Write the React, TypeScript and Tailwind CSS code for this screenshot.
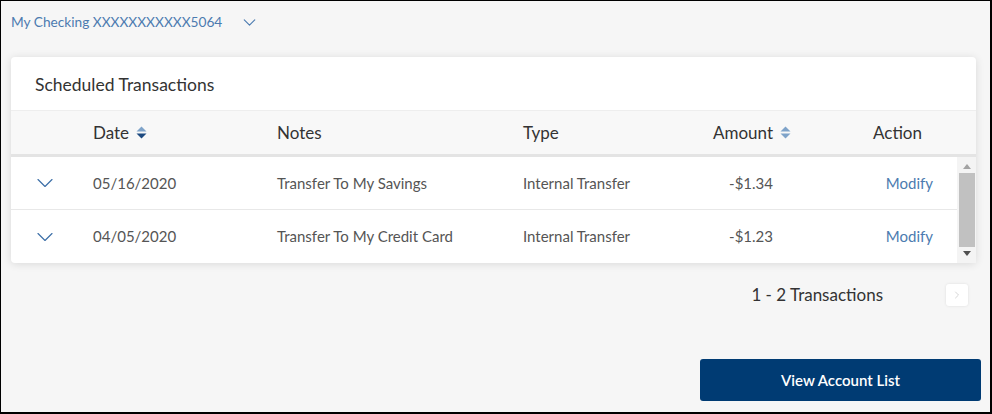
import { ChevronDown, ChevronRight } from "lucide-react";

const SortIcon = ({ down }: { down?: boolean }) => (
  <svg width="11" height="13" viewBox="0 0 11 13" className="ml-[7px]">
    <path d="M5.5 0.5 L10.5 5.5 L0.5 5.5 Z" fill="#7fa3c9" />
    <path d="M0.5 7.5 L10.5 7.5 L5.5 12.5 Z" fill={down ? "#1d4a80" : "#7fa3c9"} />
  </svg>
);

const rows = [
  { date: "05/16/2020", notes: "Transfer To My Savings", type: "Internal Transfer", amount: "-$1.34" },
  { date: "04/05/2020", notes: "Transfer To My Credit Card", type: "Internal Transfer", amount: "-$1.23" },
];

export default function App() {
  return (
    <div
      className="flex h-[414px] w-[992px] flex-col border-t border-r-2 border-b-2 border-l border-black bg-[#f6f6f6]"
      style={{ fontFamily: "Lato, 'Open Sans', sans-serif" }}
    >
      <div className="flex h-[41px] items-center pl-[10px] pt-[1px] text-[13.7px] text-[#4c7bb0]">
        <span>My Checking XXXXXXXXXXX5064</span>
        <ChevronDown className="ml-[17px] h-[21px] w-[21px]" strokeWidth={1.3} />
      </div>

      <div className="ml-[10px] mt-[15px] w-[965px] rounded-[4px] bg-white shadow-[0_1px_8px_rgba(0,0,0,0.12)]">
        <div className="flex h-[53px] items-center pl-[24px] pt-[3px] text-[17.5px] text-[#333]">
          Scheduled Transactions
        </div>
        <div className="grid h-[47px] grid-cols-[82px_184px_246px_190px_160px_1fr] items-center border-t border-b-[3px] border-t-[#eeeeee] border-b-[#e4e4e4] bg-[#f8f8f8] text-[17px] text-[#333]">
          <div />
          <div className="flex items-center">
            Date
            <SortIcon down />
          </div>
          <div>Notes</div>
          <div>Type</div>
          <div className="flex items-center">
            Amount
            <SortIcon />
          </div>
          <div>Action</div>
        </div>
        <div className="flex">
          <div className="flex-1">
            {rows.map((r, i) => (
              <div
                key={r.date}
                className={`grid h-[53px] grid-cols-[82px_184px_246px_190px_60px_1fr] items-center text-[15px] text-[#555] ${
                  i === 0 ? "border-b border-[#e8e8e8]" : ""
                }`}
              >
                <div className="pl-[20px] text-[#3d6fa8]">
                  <ChevronDown className="h-[28px] w-[28px]" strokeWidth={1} />
                </div>
                <div>{r.date}</div>
                <div>{r.notes}</div>
                <div>{r.type}</div>
                <div className="text-right">{r.amount}</div>
                <div className="pr-[24px] text-right text-[#4c7bb0]">Modify</div>
              </div>
            ))}
          </div>
          <div className="flex w-[19px] flex-col items-center bg-[#f4f4f4] py-[3px]">
            <svg width="8" height="5" viewBox="0 0 8 5" className="mt-[4px]">
              <path d="M4 0 L8 5 L0 5 Z" fill="#a3a3a3" />
            </svg>
            <div className="my-[4px] w-[16px] flex-1 bg-[#c1c1c1]" />
            <svg width="8" height="5" viewBox="0 0 8 5" className="mb-[4px]">
              <path d="M0 0 L8 0 L4 5 Z" fill="#505050" />
            </svg>
          </div>
        </div>
      </div>

      <div className="mt-[20px] flex h-[24px] items-center justify-end pr-[22px]">
        <span className="text-[17px] text-[#333]">1 - 2 Transactions</span>
        <div className="ml-[63px] flex h-[22px] w-[22px] items-center justify-center rounded-[3px] bg-white shadow-[0_0_3px_rgba(0,0,0,0.1)]">
          <ChevronRight className="h-[12px] w-[12px] text-[#c8c8c8]" strokeWidth={1.5} />
        </div>
      </div>

      <div className="mt-[52px] flex justify-end pr-[9px]">
        <button className="h-[42px] w-[281px] rounded-[3px] bg-[#003b73] text-[15px] font-semibold text-white">
          View Account List
        </button>
      </div>
    </div>
  );
}
